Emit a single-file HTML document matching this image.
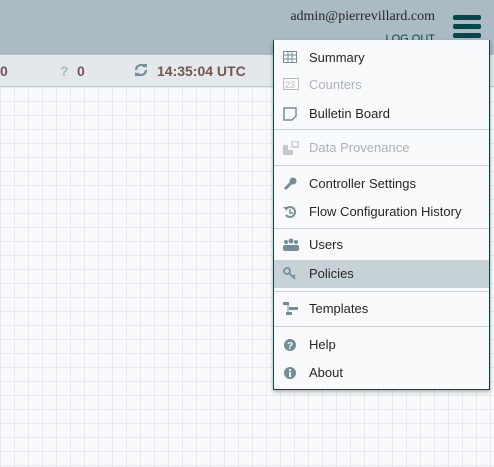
<!DOCTYPE html>
<html><head><style>
*{margin:0;padding:0;box-sizing:border-box}
body{width:494px;height:467px;overflow:hidden;position:relative;font-family:"Liberation Sans",sans-serif;
background-color:#f9fafb;
background-image:linear-gradient(#e5eaed 1px,transparent 1px),linear-gradient(90deg,#e5eaed 1px,transparent 1px);
background-size:14px 14px;background-position:0 3px}
#hdr{position:absolute;left:0;top:0;width:494px;height:55px;background:#aabbc3}
#email{position:absolute;right:59px;top:9px;font-family:"Liberation Serif",serif;font-size:14px;color:#262626}
#logout{position:absolute;right:59px;top:33px;font-size:11px;color:#004849}
.bar{position:absolute;left:453px;width:28px;height:5px;border-radius:2px;background:#004849}
#tb{position:absolute;left:0;top:55px;width:494px;height:32px;background:#e3e8eb;border-bottom:1px solid #c0ccd2}
.tt{position:absolute;top:8px;font-size:14px;font-weight:bold;color:#775351}
#menu{position:absolute;left:273px;top:40px;width:217px;height:350px;background:#f9fafb;border:1px solid #004849;border-top:none;box-shadow:0 2px 4px rgba(0,0,0,.3)}
.it{position:absolute;left:0;width:215px;height:28px;font-size:13px;color:#262626;line-height:30px;padding-left:35px}
.it svg{position:absolute;left:9px;top:8px}
.dis{color:#aab3b8}
.hl{background:#c7d2d7}
.dv{position:absolute;left:0;width:215px;height:1px;background:#c7d2d7}
</style></head><body>
<div id="hdr">
<div id="email">admin@pierrevillard.com</div>
<div id="logout">LOG OUT</div>
<div class="bar" style="top:15px"></div><div class="bar" style="top:24px"></div><div class="bar" style="top:33px"></div>
</div>
<div id="tb">
<div class="tt" style="left:0">0</div>
<div class="tt" style="left:60px;color:#a6b7bf">?</div>
<div class="tt" style="left:77px">0</div>
<svg style="position:absolute;left:134px;top:8px" width="14" height="14" viewBox="0 0 14 14"><path d="M2 7a5 5 0 0 1 9-3M12 7a5 5 0 0 1-9 3" stroke="#728e9b" stroke-width="2.2" fill="none"/><path d="M9 1l4 0 0 4z M5 13l-4 0 0-4z" fill="#728e9b"/></svg>
<div class="tt" style="left:157px">14:35:04 UTC</div>
</div>
<div id="menu">
<div class="it" style="top:3px"><svg width="14" height="12"><rect x="0.5" y="0.5" width="13" height="11" fill="none" stroke="#728e9b"/><path d="M0 4h14M0 8h14M5 0v12M9 0v12" stroke="#728e9b"/></svg>Summary</div>
<div class="it dis" style="top:30px"><svg width="16" height="12"><rect x="0.5" y="0.5" width="15" height="11" fill="none" stroke="#bbb"/><text x="2" y="10" font-size="9" fill="#bbb" font-family="Liberation Sans">23</text></svg>Counters</div>
<div class="it" style="top:59px"><svg width="14" height="14"><path d="M1 1h12v8l-4 4H1z" fill="none" stroke="#728e9b" stroke-width="1.5"/></svg>Bulletin Board</div>
<div class="dv" style="top:89px"></div>
<div class="it dis" style="top:93px"><svg width="16" height="14"><path d="M0 4h5v5h5v5H0z" fill="#c5c9cc"/><rect x="9" y="0" width="6" height="6" fill="none" stroke="#c5c9cc" stroke-width="1.5"/></svg>Data Provenance</div>
<div class="dv" style="top:125px"></div>
<div class="it" style="top:129px"><svg width="14" height="14"><path d="M2 12l6-6" stroke="#728e9b" stroke-width="3"/><circle cx="10" cy="4" r="3.5" fill="#728e9b"/></svg>Controller Settings</div>
<div class="it" style="top:157px"><svg width="14" height="14"><path d="M3 4a5 5 0 1 1 0 6" stroke="#728e9b" stroke-width="2" fill="none"/><path d="M7 4v4h3" stroke="#728e9b" stroke-width="1.5" fill="none"/><path d="M0 2l4 0 0 4z" fill="#728e9b"/></svg>Flow Configuration History</div>
<div class="dv" style="top:188px"></div>
<div class="it" style="top:190px"><svg width="16" height="14"><circle cx="3" cy="4" r="2" fill="#728e9b"/><circle cx="8" cy="3" r="2.5" fill="#728e9b"/><circle cx="13" cy="4" r="2" fill="#728e9b"/><rect x="0" y="7" width="16" height="6" rx="2" fill="#728e9b"/></svg>Users</div>
<div class="it hl" style="top:220px;line-height:27px"><svg width="14" height="14" style="top:6px"><circle cx="4" cy="5" r="3" fill="none" stroke="#728e9b" stroke-width="1.8"/><path d="M6 7l6 6M10 11l2-2" stroke="#728e9b" stroke-width="1.8"/></svg>Policies</div>
<div class="dv" style="top:251px"></div>
<div class="it" style="top:254px"><svg width="16" height="14"><rect x="0" y="0" width="6" height="3" fill="#728e9b"/><rect x="6" y="5" width="9" height="3" fill="#728e9b"/><rect x="3" y="10" width="6" height="3" fill="#728e9b"/><path d="M5 2v8" stroke="#728e9b"/></svg>Templates</div>
<div class="dv" style="top:286px"></div>
<div class="it" style="top:290px"><svg width="14" height="14"><circle cx="7" cy="7" r="6" fill="#728e9b"/><text x="4" y="11" font-size="10" font-weight="bold" fill="#fff" font-family="Liberation Sans">?</text></svg>Help</div>
<div class="it" style="top:318px"><svg width="14" height="14"><circle cx="7" cy="7" r="6" fill="#728e9b"/><rect x="6" y="6" width="2" height="5" fill="#fff"/><circle cx="7" cy="4" r="1.1" fill="#fff"/></svg>About</div>
</div>
</body></html>
